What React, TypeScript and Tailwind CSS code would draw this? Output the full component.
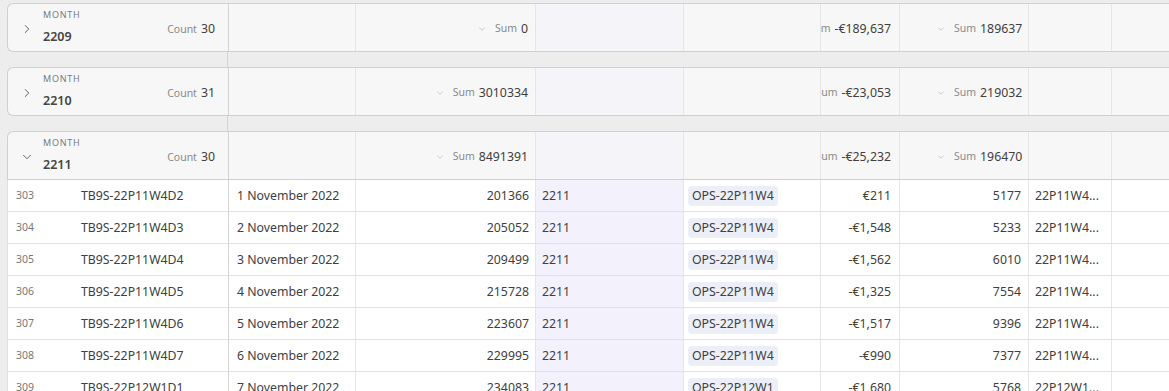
import { ChevronRight, ChevronDown } from "lucide-react";

const COLS = "grid-cols-[221px_127px_180px_148px_137px_79px_129px_83px_80px]";

const GROUPS = [
  { month: "2209", count: 30, sum: "0", euro: "-€189,637", total: "189637", open: false },
  { month: "2210", count: 31, sum: "3010334", euro: "-€23,053", total: "219032", open: false },
  { month: "2211", count: 30, sum: "8491391", euro: "-€25,232", total: "196470", open: true },
];

const ROWS = [
  { n: 303, id: "TB9S-22P11W4D2", date: "1 November 2022", num: "201366", chip: "OPS-22P11W4", eur: "€211", cnt: "5177", code: "22P11W4..." },
  { n: 304, id: "TB9S-22P11W4D3", date: "2 November 2022", num: "205052", chip: "OPS-22P11W4", eur: "-€1,548", cnt: "5233", code: "22P11W4..." },
  { n: 305, id: "TB9S-22P11W4D4", date: "3 November 2022", num: "209499", chip: "OPS-22P11W4", eur: "-€1,562", cnt: "6010", code: "22P11W4..." },
  { n: 306, id: "TB9S-22P11W4D5", date: "4 November 2022", num: "215728", chip: "OPS-22P11W4", eur: "-€1,325", cnt: "7554", code: "22P11W4..." },
  { n: 307, id: "TB9S-22P11W4D6", date: "5 November 2022", num: "223607", chip: "OPS-22P11W4", eur: "-€1,517", cnt: "9396", code: "22P11W4..." },
  { n: 308, id: "TB9S-22P11W4D7", date: "6 November 2022", num: "229995", chip: "OPS-22P11W4", eur: "-€990", cnt: "7377", code: "22P11W4..." },
  { n: 309, id: "TB9S-22P12W1D1", date: "7 November 2022", num: "234083", chip: "OPS-22P12W1", eur: "-€1,680", cnt: "5768", code: "22P12W1..." },
];

function Sum({ value }: { value: string }) {
  return (
    <div className="flex items-center justify-end whitespace-nowrap">
      <ChevronDown className="w-[10px] h-[10px] text-[#a0a0a0] shrink-0 mr-[8px]" strokeWidth={1.25} />
      <span className="text-[10.5px] text-[#8a8a8a] mr-[4px]">Sum</span>
      <span className="text-[12.3px] text-[#404040]">{value}</span>
    </div>
  );
}

function Spacer() {
  return (
    <div className={`grid ${COLS} h-[15px]`}>
      <div className="border-r border-[#d4d4d4]" />
    </div>
  );
}

export default function App() {
  return (
    <div className="w-[1169px] h-[391px] overflow-hidden bg-[#ededed] pl-[7px] pt-[3px]" style={{ fontFamily: '"Segoe UI", "Noto Sans", sans-serif' }}>
      {GROUPS.map((g, gi) => (
        <div key={g.month}>
          {gi > 0 && <Spacer />}
          {/* Group header */}
          <div className={`grid ${COLS} h-[49px] border border-r-0 border-[#d0d0d0] ${g.open ? "rounded-tl-md" : "rounded-l-md"} bg-[#f7f7f7]`}>
            <div className="flex items-center pl-[12px] pr-[13px] pt-[3px] border-r border-[#d4d4d4]">
              {g.open ? (
                <ChevronDown className="w-[14px] h-[14px] text-[#444] shrink-0" strokeWidth={1.4} />
              ) : (
                <ChevronRight className="w-[14px] h-[14px] text-[#444] shrink-0" strokeWidth={1.4} />
              )}
              <div className="ml-[9px] flex flex-col -mt-[5px]">
                <span className="text-[9px] tracking-[0.08em] text-[#7a7a7a] leading-[12px]">MONTH</span>
                <span className="text-[12.5px] font-semibold text-[#444] mt-[8px] leading-[16px]">{g.month}</span>
              </div>
              <div className="ml-auto flex items-baseline gap-[4px]">
                <span className="text-[10.5px] text-[#8a8a8a]">Count</span>
                <span className="text-[12.3px] text-[#404040]">{g.count}</span>
              </div>
            </div>
            <div className="border-r border-[#e6e6e6]" />
            <div className="flex items-center justify-end pr-[7px] pt-[3px] border-r border-[#e6e6e6]">
              <Sum value={g.sum} />
            </div>
            <div className="bg-[#f5f4f9] border-r border-[#e6e6e6]" />
            <div className="border-r border-[#e6e6e6]" />
            <div className="flex items-center justify-end pr-[8px] pt-[3px] overflow-hidden border-r border-[#e6e6e6]">
              <Sum value={g.euro} />
            </div>
            <div className="flex items-center justify-start pl-[36px] pt-[3px] border-r border-[#e6e6e6]">
              <Sum value={g.total} />
            </div>
            <div className="border-r border-[#e6e6e6]" />
            <div />
          </div>

          {/* Rows */}
          {g.open &&
            ROWS.map(r => (
              <div key={r.n} className={`grid ${COLS} h-[32px] bg-white border-l border-b border-[#e2e2e2] text-[12.3px] text-[#404040]`}>
                <div className="flex items-center pt-[1px] border-r border-[#d4d4d4]">
                  <span className="w-[73px] pl-[8px] text-[10.5px] text-[#777]">{r.n}</span>
                  <span>{r.id}</span>
                </div>
                <div className="flex items-center pl-[8px] pt-[1px] border-r border-[#e6e6e6]">{r.date}</div>
                <div className="flex items-center justify-end pr-[6px] pt-[1px] border-r border-[#e6e6e6]">{r.num}</div>
                <div className="flex items-center pl-[6px] pt-[1px] bg-[#f3f1fc] border-r border-[#e6e6e6]">2211</div>
                <div className="flex items-center pl-[4px] pt-[1px] border-r border-[#e6e6e6]">
                  <span className="px-[4px] h-[20px] leading-[20px] rounded-[4px] bg-[#eceef8]">{r.chip}</span>
                </div>
                <div className="flex items-center justify-end pr-[8px] pt-[1px] border-r border-[#e6e6e6]">{r.eur}</div>
                <div className="flex items-center justify-end pr-[7px] pt-[1px] border-r border-[#e6e6e6]">{r.cnt}</div>
                <div className="flex items-center pl-[6px] pt-[1px] border-r border-[#e6e6e6] whitespace-nowrap overflow-hidden">{r.code}</div>
                <div />
              </div>
            ))}
        </div>
      ))}
    </div>
  );
}
